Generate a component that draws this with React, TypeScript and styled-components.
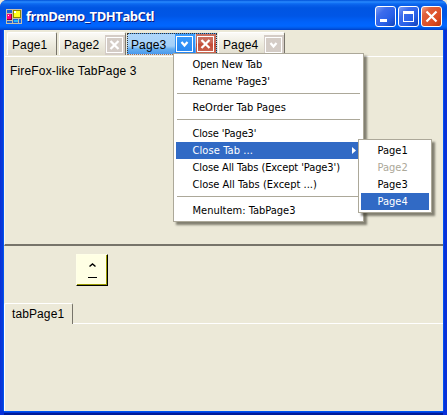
import React from "react";
import styled, { createGlobalStyle, css } from "styled-components";

const GlobalStyle = createGlobalStyle`
  * { box-sizing: border-box; }
  html, body { margin: 0; padding: 0; background: #ece9d8; overflow: hidden; }
`;

const Window = styled.div`
  position: relative;
  width: 447px;
  height: 415px;
  display: flex;
  flex-direction: column;
  overflow: hidden;
  background: #0831d9;
  border-radius: 7px 7px 0 0;
  color: #000;
  font: 12px/16px "Liberation Sans", sans-serif;
  white-space: pre;
`;

const TitleBar = styled.header`
  height: 30px;
  flex: none;
  display: flex;
  align-items: center;
  padding: 3px 5px 0 6px;
  background: linear-gradient(
    #0050d8 0, #2b8cff 2px, #1272f5 3px, #0860ea 5px, #0055e2 8px,
    #0056e6 16px, #0062fa 22px, #0066ff 26px, #005ae8 28px, #003fc8 30px
  );
`;

const Title = styled.h1`
  flex: 1;
  margin: 0 0 2px 4px;
  color: #fff;
  font: bold 13px/20px "Open Sans", sans-serif;
  letter-spacing: -0.45px;
  text-shadow: 1px 1px 0 #0a1883;
`;

const CaptionButtons = styled.div`
  display: flex;
  gap: 2px;
`;

const CaptionButton = styled.button<{ $danger?: boolean }>`
  width: 21px;
  height: 21px;
  padding: 0;
  border: 1px solid #fff;
  border-radius: 3px;
  display: flex;
  background: ${(p) =>
    p.$danger
      ? "linear-gradient(135deg, #f0a088 0, #e0603c 25%, #dc4c22 70%, #b93812 100%)"
      : "linear-gradient(135deg, #7b9cf4 0, #3c6cec 30%, #2860e8 65%, #1242b8 100%)"};
`;

const Client = styled.main`
  flex: none;
  width: 439px;
  height: 381px;
  margin-left: 4px;
  display: flex;
  flex-direction: column;
  background: #ece9d8;
  box-shadow: -1px 0 0 #0054f0, -3px 0 0 #0838d8, 1px 0 0 #0050f0,
    0 1px 0 #0054f0, 0 2px 0 #0038d8, 0 4px 0 #001c98;
`;

const Strip = styled.nav`
  height: 26px;
  flex: none;
  padding: 2px 0 0 2px;
  display: flex;
  align-items: flex-start;
  border-left: 1px solid #f8f6ee;
`;

const Tab = styled.div<{ $w: number; $gap?: number; $active?: boolean }>`
  width: ${(p) => p.$w}px;
  height: 23px;
  flex: none;
  display: flex;
  align-items: center;
  padding: 1px 0 0 4px;
  letter-spacing: 0.1px;
  border: 1px solid #fff;
  border-right: 1px solid #77746a;
  border-bottom: 0;
  border-radius: 2px 2px 0 0;
  margin-right: ${(p) => p.$gap ?? 1}px;
  background: linear-gradient(#fbfaf7 0, #efede1 45%, #e0dccd 100%);
  ${(p) =>
    p.$active &&
    css`
      height: 22px;
      margin-top: 1px;
      padding: 0 0 0 3px;
      border: 1px dotted #333;
      border-bottom: 1px dotted #b06a48;
      border-radius: 0;
      background: linear-gradient(#b0d7fb 0, #a4d0f8 60%, #66aef0 75%, #4a9aec 100%);
    `}
`;

const TabLabel = styled.span`
  flex: 1;
  padding-top: 1px;
`;

const TabButton = styled.button<{ $tone: "grey" | "blue" | "red" }>`
  width: 20px;
  height: 20px;
  flex: none;
  padding: 1px;
  border: 0;
  display: flex;
  margin-left: 1px;
  background: ${(p) =>
    ({
      grey: "#d4ccc6",
      blue: "linear-gradient(#3c9cfc, #2584f0)",
      red: "linear-gradient(#c97364 0, #ca6655 45%, #c34b36 50%, #cb6955 100%)",
    })[p.$tone]};
`;

const Page = styled.section`
  height: 190px;
  flex: none;
  padding: 6px 0 0 5px;
  border-top: 1px solid #fff;
  border-left: 1px solid #f8f6ee;
  border-bottom: 2px solid #77746a;
  letter-spacing: 0.16px;
`;

const LowerPanel = styled.section`
  height: 57px;
  flex: none;
  padding: 8px 0 0 72px;
`;

const UpButton = styled.button`
  display: block;
  width: 32px;
  height: 32px;
  padding: 0;
  border: 1px solid #ffffe8;
  border-right-color: #000;
  border-bottom-color: #000;
  background: #ffffe4;
  box-shadow: inset -1px -1px 0 #999900;
`;

const LowerStrip = styled.nav`
  display: flex;
  flex: none;
  height: 21px;
  align-items: stretch;
`;

const LowerTab = styled.div`
  width: 69px;
  padding: 2px 0 0 7px;
  border: 1px solid #fff;
  border-right: 1px solid #77746a;
  border-bottom: 0;
  border-radius: 2px 2px 0 0;
  letter-spacing: 0.1px;
`;

const StripEdge = styled.div`
  flex: 1;
  border-bottom: 1px solid #fff;
`;

const LowerPage = styled.section`
  flex: 1;
  border-left: 1px solid #fff;
`;

const Menu = styled.div<{ $sub?: boolean }>`
  position: absolute;
  left: ${(p) => (p.$sub ? 358 : 173)}px;
  top: ${(p) => (p.$sub ? 139 : 53)}px;
  width: ${(p) => (p.$sub ? 74 : 191)}px;
  padding: 2px;
  border: 1px solid #aca899;
  background: #fff;
  box-shadow: 3px 3px 2px rgba(60, 58, 45, 0.6);
  font: 11px/17px "DejaVu Sans Condensed", "DejaVu Sans", sans-serif;
  font-stretch: condensed;
`;

const MenuItem = styled.div<{ $selected?: boolean; $disabled?: boolean; $ls?: number }>`
  height: 17px;
  padding: 0 5px 0 16.5px;
  display: flex;
  justify-content: space-between;
  align-items: center;
  letter-spacing: ${(p) => p.$ls ?? 0}px;
  color: ${(p) => (p.$selected ? "#fff" : p.$disabled ? "#aca899" : "#000")};
  background: ${(p) => (p.$selected ? "#316ac5" : "transparent")};
`;

const Separator = styled.hr`
  height: 1px;
  margin: 3px 1px 5px;
  border: 0;
  background: #aca899;
`;

const Logo = () => (
  <svg width="16" height="15" viewBox="0 0 16 15" shapeRendering="crispEdges">
    <path fill="#c8c0a8" d="M0 0h16v15H0z" />
    <path fill="#1b62d8" d="M1 1h5v3H1z" />
    <path fill="#90002c" d="M1 5h5v6H1z" />
    <path fill="#ff0080" d="M1 5h4v5H1z" />
    <path fill="#8c8400" d="M7 1h8v8H7z" />
    <path fill="#ffff20" d="M8 2h6v6H8z" />
    <path fill="#fff" d="M8 2h2v2H8zM2 6h1v1H2z" />
    <path fill="#1b62d8" d="M1 12h5v2H1zM7 10h5v4H7zM13 10h2v4h-2z" />
    <path fill="#20b8ff" d="M8 11h4v2H8z" />
  </svg>
);

const CaptionGlyph = ({ kind }: { kind: "min" | "max" | "close" }) => (
  <svg width="19" height="19" viewBox="0 0 19 19" shapeRendering="crispEdges">
    {kind === "min" && <path fill="#fff" d="M4 12h7v3H4z" />}
    {kind === "max" && <path fill="#fff" fillRule="evenodd" d="M4 4h11v11H4zM5 7v7h9V7z" />}
    {kind === "close" && (
      <path
        stroke="#fff"
        strokeWidth="2.2"
        shapeRendering="auto"
        d="M4.5 4.5l10 10M14.5 4.5l-10 10"
      />
    )}
  </svg>
);

const TabGlyph = ({ kind }: { kind: "drop" | "close" }) => (
  <svg width="18" height="18" viewBox="0 0 18 18" fill="none" stroke="#fff">
    <path shapeRendering="crispEdges" d="M.5 1.5h16v15H.5z" />
    {kind === "drop" ? (
      <path strokeWidth="2.2" d="M5.5 7L8.5 10.5L11.5 7" />
    ) : (
      <path strokeWidth="2.3" d="M4.5 5l8 8M12.5 5l-8 8" />
    )}
  </svg>
);

export default function App() {
  return (
    <>
      <GlobalStyle />
      <Window>
        <TitleBar>
          <Logo />
          <Title>frmDemo_TDHTabCtl</Title>
          <CaptionButtons>
            <CaptionButton aria-label="Minimize"><CaptionGlyph kind="min" /></CaptionButton>
            <CaptionButton aria-label="Maximize"><CaptionGlyph kind="max" /></CaptionButton>
            <CaptionButton aria-label="Close" $danger><CaptionGlyph kind="close" /></CaptionButton>
          </CaptionButtons>
        </TitleBar>
        <Client>
          <Strip>
            <Tab $w={50} $gap={2}><TabLabel>Page1</TabLabel></Tab>
            <Tab $w={67}>
              <TabLabel>Page2</TabLabel>
              <TabButton $tone="grey"><TabGlyph kind="close" /></TabButton>
            </Tab>
            <Tab $w={90} $active>
              <TabLabel>Page3</TabLabel>
              <TabButton $tone="blue"><TabGlyph kind="drop" /></TabButton>
              <TabButton $tone="red"><TabGlyph kind="close" /></TabButton>
            </Tab>
            <Tab $w={67}>
              <TabLabel>Page4</TabLabel>
              <TabButton $tone="grey"><TabGlyph kind="drop" /></TabButton>
            </Tab>
          </Strip>
          <Page>FireFox-like TabPage 3</Page>
          <LowerPanel>
            <UpButton aria-label="Collapse">
              <svg width="30" height="30" viewBox="0 0 30 30" fill="none" stroke="#000">
                <path strokeWidth="1.5" d="M12.5 11.5L15.5 9L18.5 11.5" />
                <path shapeRendering="crispEdges" d="M11 22.5h9" />
              </svg>
            </UpButton>
          </LowerPanel>
          <LowerStrip>
            <LowerTab>tabPage1</LowerTab>
            <StripEdge />
          </LowerStrip>
          <LowerPage />
        </Client>
        <Menu>
          <MenuItem $ls={-0.1}>Open New Tab</MenuItem>
          <MenuItem $ls={-0.15}>Rename 'Page3'</MenuItem>
          <Separator />
          <MenuItem $ls={0.05}>ReOrder Tab Pages</MenuItem>
          <Separator />
          <MenuItem $ls={-0.15}>Close 'Page3'</MenuItem>
          <MenuItem $selected $ls={0.1}>
            Close Tab ...
            <svg width="4" height="7" viewBox="0 0 4 7"><path fill="#fff" d="M0 0L4 3.5L0 7z" /></svg>
          </MenuItem>
          <MenuItem $ls={-0.1}>Close All Tabs (Except 'Page3')</MenuItem>
          <MenuItem>Close All Tabs (Except ...)</MenuItem>
          <Separator />
          <MenuItem>MenuItem: TabPage3</MenuItem>
        </Menu>
        <Menu $sub>
          <MenuItem>Page1</MenuItem>
          <MenuItem $disabled>Page2</MenuItem>
          <MenuItem>Page3</MenuItem>
          <MenuItem $selected>Page4</MenuItem>
        </Menu>
      </Window>
    </>
  );
}
